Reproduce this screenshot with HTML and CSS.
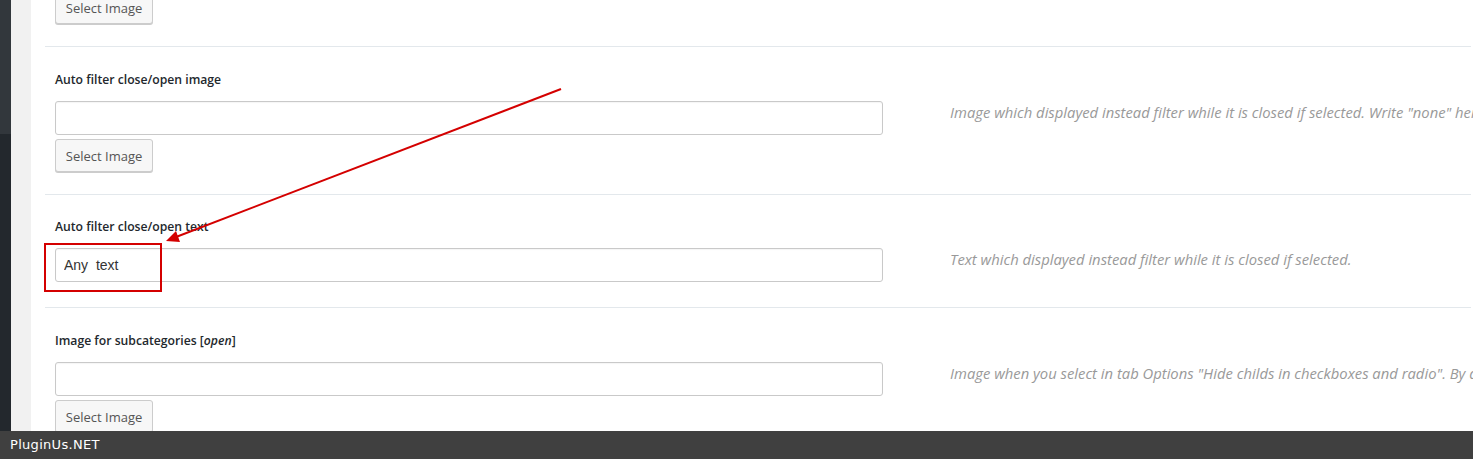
FILE: index.html
```html
<!DOCTYPE html>
<html>
<head>
<meta charset="utf-8">
<link rel="stylesheet" href="styles.css">
</head>
<body>
<div class="layout">
  <aside class="sidebar"><div class="sidebar-top"></div><div class="sidebar-bottom"></div></aside>
  <div class="gutter"></div>
  <main class="panel">
    <div class="row-partial">
      <button class="btn">Select Image</button>
    </div>
    <section class="row">
      <div class="label">Auto filter close/open image</div>
      <div class="field">
        <input class="input" type="text" value="">
        <button class="btn btn--below">Select Image</button>
      </div>
      <div class="desc">Image which displayed instead filter while it is closed if selected. Write "none" here</div>
    </section>
    <section class="row row--text">
      <div class="label">Auto filter close/open text</div>
      <div class="field">
        <input class="input" type="text" value="Any  text">
      </div>
      <div class="desc">Text which displayed instead filter while it is closed if selected.</div>
    </section>
    <section class="row">
      <div class="label">Image for subcategories [<i>open</i>]</div>
      <div class="field">
        <input class="input" type="text" value="">
        <button class="btn btn--below">Select Image</button>
      </div>
      <div class="desc">Image when you select in tab Options "Hide childs in checkboxes and radio". By default</div>
    </section>
  </main>
</div>
<div class="annot-box"></div>
<svg class="annot-arrow" width="1473" height="459" viewBox="0 0 1473 459">
  <line x1="561" y1="89" x2="176" y2="237" stroke="#d40000" stroke-width="2"/>
  <polygon points="166,241 176,231 180,242" fill="#d40000"/>
</svg>
<footer class="footer">PluginUs.NET</footer>
</body>
</html>
```
FILE: styles.css
```css
html, body {
  margin: 0;
  padding: 0;
  height: 459px;
  overflow: hidden;
  background: #fff;
}
.layout {
  display: flex;
  height: 459px;
}
.sidebar {
  width: 11px;
  flex: none;
  display: flex;
  flex-direction: column;
}
.sidebar-top { height: 134px; background: #32373c; }
.sidebar-bottom { flex: 1; background: #23282d; }
.gutter {
  width: 20px;
  flex: none;
  background: #f1f1f1;
}
.panel {
  flex: 1;
  min-width: 0;
  background: #fff;
  margin-top: -9px;
  padding-left: 14px;
  font-family: "Open Sans", "Liberation Sans", sans-serif;
}
.row-partial {
  padding: 0 0 22px 10px;
}
.row {
  border-top: 1px solid #e3e8ec;
  margin-right: 2px;
  padding: 22px 0 22px 10px;
  display: grid;
  grid-template-columns: 828px minmax(0, 1fr);
  column-gap: 67px;
  grid-template-rows: auto auto;
}
.row--text {
  padding-top: 21px;
  padding-bottom: 25px;
}
.label {
  grid-column: 1 / 3;
  font-size: 12.2px;
  font-weight: 600;
  line-height: 20px;
  color: #23282d;
  margin-bottom: 12px;
  white-space: nowrap;
  padding-top: 1px;
  height: 19px;
}
.label i { font-weight: 600; }
.field {
  display: flex;
  flex-direction: column;
  align-items: flex-start;
}
.input {
  box-sizing: border-box;
  width: 828px;
  height: 34px;
  margin: 0;
  border: 1px solid #c9c9c9;
  border-radius: 3px;
  padding: 0 8px;
  font-family: "Liberation Sans", Arial, sans-serif;
  font-size: 14px;
  color: #333;
  background: #fff;
  box-shadow: inset 0 1px 1px rgba(0,0,0,0.04);
}
.btn {
  box-sizing: border-box;
  height: 33px;
  width: 98px;
  margin: 0;
  padding: 0;
  border: 1px solid #ccc;
  border-radius: 3px;
  background: #f7f7f7;
  box-shadow: 0 1px 0 #ccc;
  font-family: "Open Sans", sans-serif;
  font-size: 13px;
  color: #555;
  white-space: nowrap;
}
.btn--below { margin-top: 4px; }
.desc {
  padding-top: 1px;
  font-size: 14.8px;
  line-height: 20px;
  font-style: italic;
  font-weight: 400;
  color: #999;
  white-space: nowrap;
}
.annot-box {
  position: absolute;
  left: 44px;
  top: 243px;
  width: 114px;
  height: 45px;
  border: 2px solid #d40000;
}
.annot-arrow {
  position: absolute;
  left: 0;
  top: 0;
  pointer-events: none;
}
.footer {
  position: fixed;
  left: 0;
  right: 0;
  bottom: 0;
  height: 28px;
  background: #404040;
  color: #fff;
  font-family: "DejaVu Sans", sans-serif;
  font-size: 13px;
  letter-spacing: 0.3px;
  line-height: 28px;
  padding-left: 10px;
}
```
